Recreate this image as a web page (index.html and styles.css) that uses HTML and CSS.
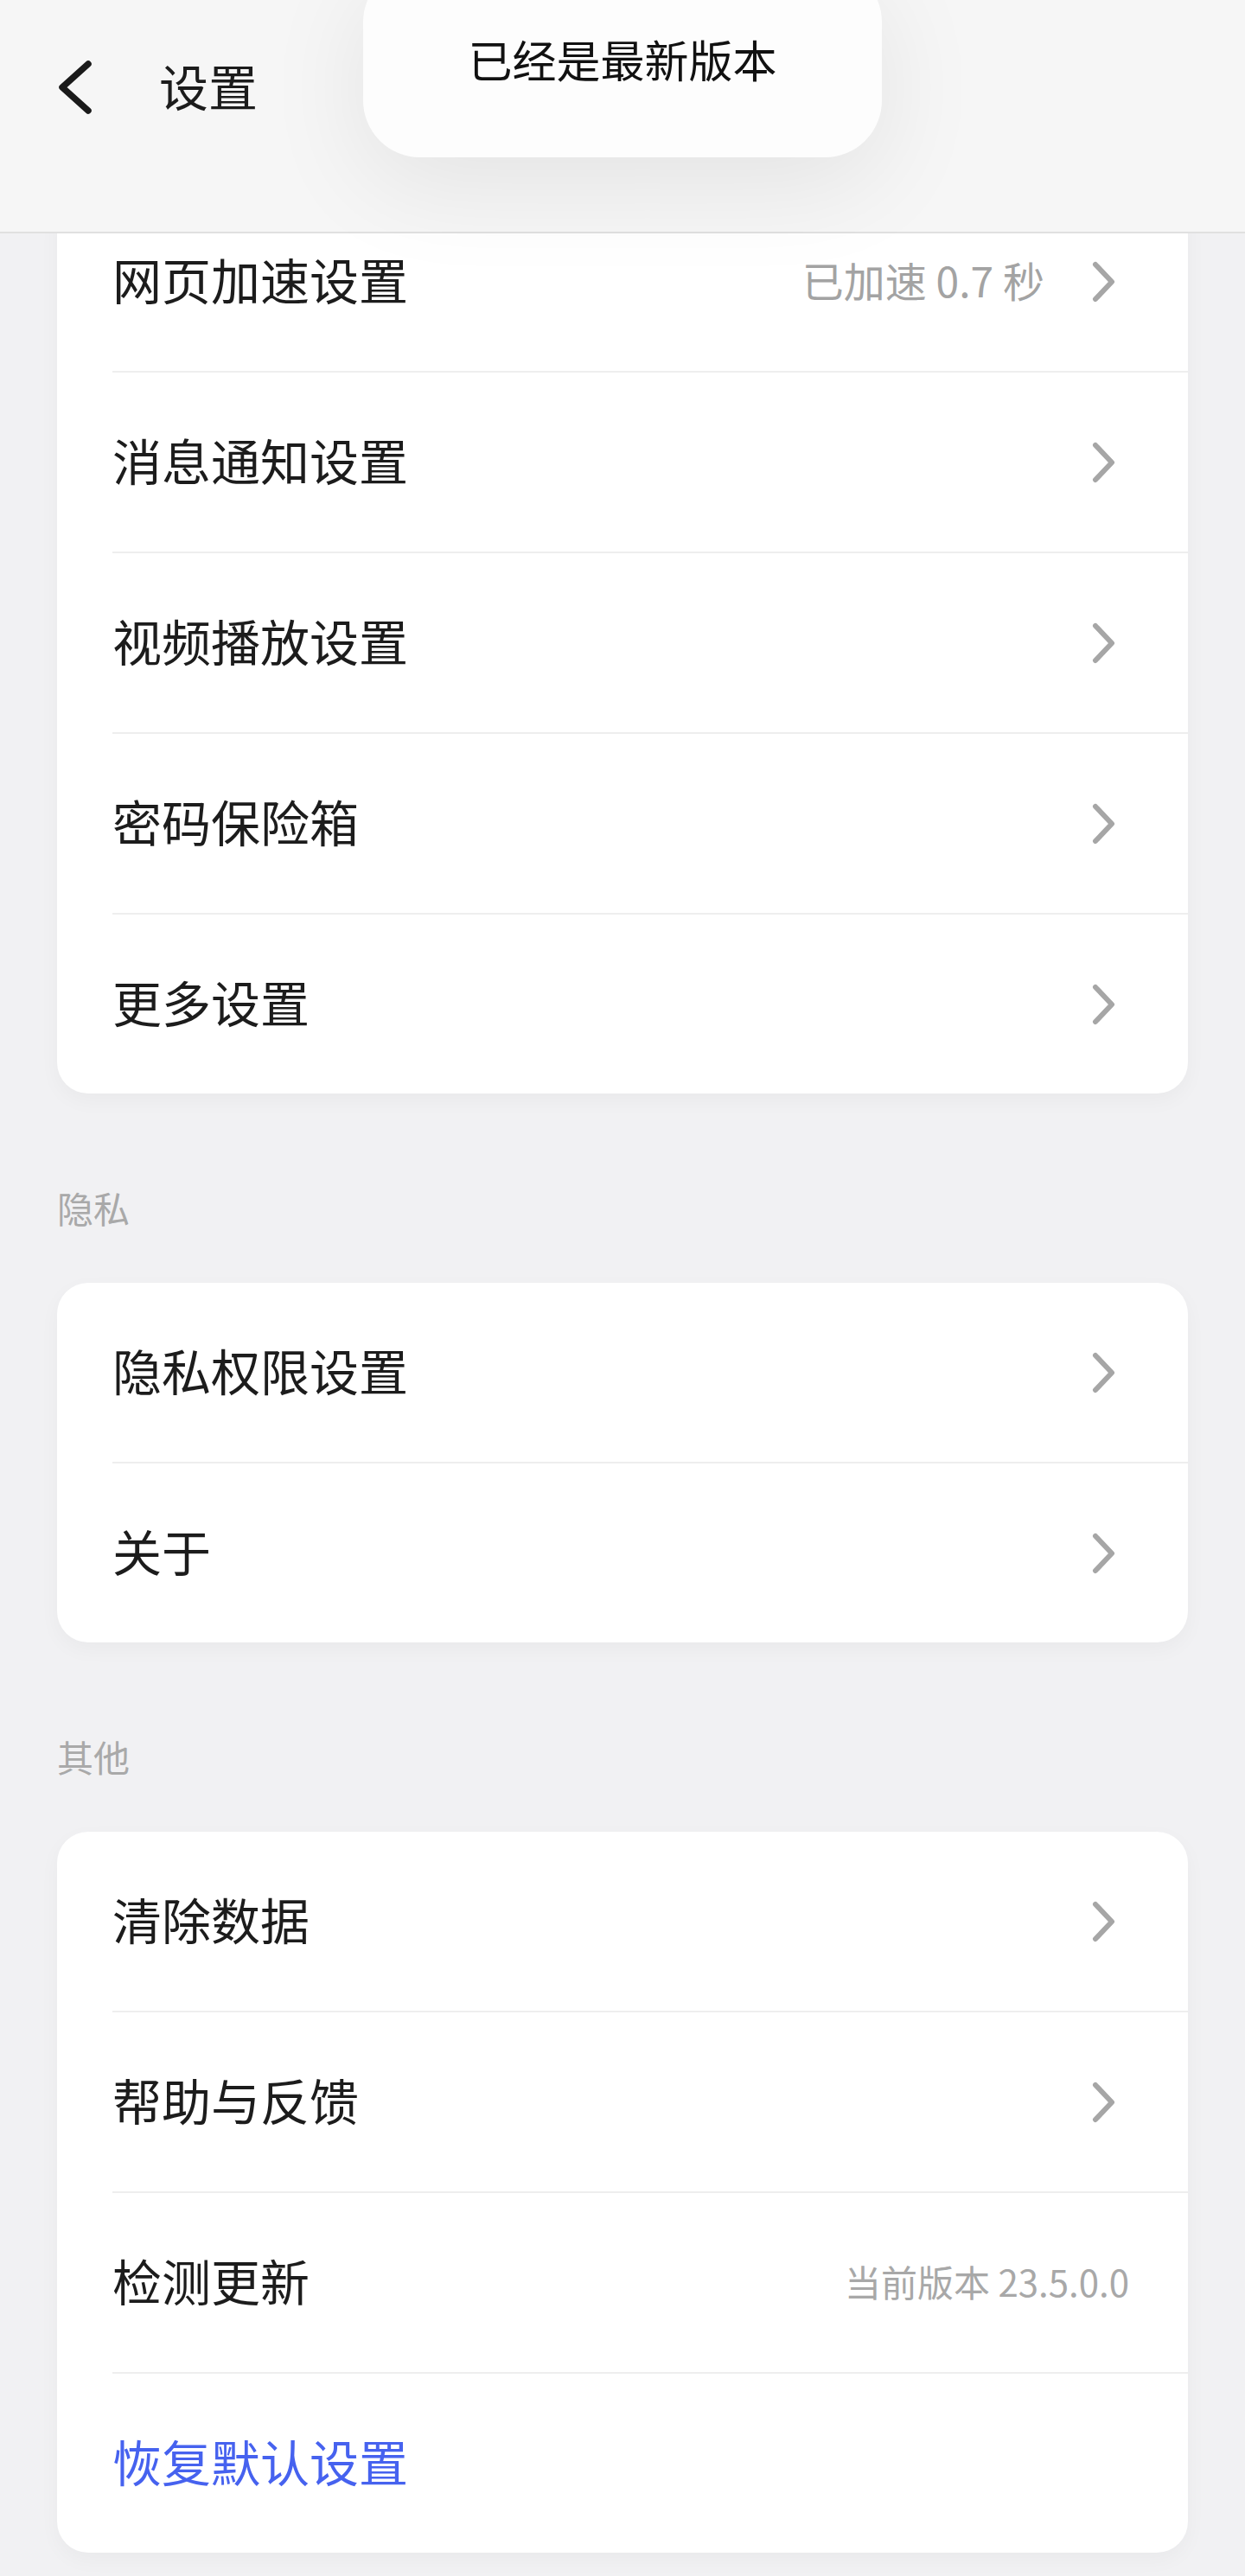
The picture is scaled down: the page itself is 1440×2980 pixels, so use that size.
FILE: index.html
```html
<!DOCTYPE html>
<html lang="zh-CN">
<head>
    <meta charset="UTF-8">
    <title>设置</title>
    <meta name="viewport" content="width=device-width, initial-scale=1.0">
    <link rel="stylesheet" href="styles.css">
</head>
<body>
    <header class="topbar">
        <svg class="back" width="40" height="64" viewBox="0 0 40 64">
            <polyline points="36,4 6,31 36,58" fill="none" stroke="#1a1a1a" stroke-width="7.5" stroke-linecap="round" stroke-linejoin="round"/>
        </svg>
        <span class="title">设置</span>
    </header>

    <div class="toast">已经是最新版本</div>

    <main class="content">
        <div class="card">
            <div class="row">
                <span class="label">网页加速设置</span>
                <span class="value">已加速 0.7 秒</span>
                <svg class="chev" width="28" height="48" viewBox="0 0 28 48"><polyline points="4,4 23,24 4,44"/></svg>
            </div>
            <div class="row">
                <span class="label">消息通知设置</span>
                <svg class="chev" width="28" height="48" viewBox="0 0 28 48"><polyline points="4,4 23,24 4,44"/></svg>
            </div>
            <div class="row">
                <span class="label">视频播放设置</span>
                <svg class="chev" width="28" height="48" viewBox="0 0 28 48"><polyline points="4,4 23,24 4,44"/></svg>
            </div>
            <div class="row">
                <span class="label">密码保险箱</span>
                <svg class="chev" width="28" height="48" viewBox="0 0 28 48"><polyline points="4,4 23,24 4,44"/></svg>
            </div>
            <div class="row">
                <span class="label">更多设置</span>
                <svg class="chev" width="28" height="48" viewBox="0 0 28 48"><polyline points="4,4 23,24 4,44"/></svg>
            </div>
        </div>

        <div class="section-title">隐私</div>
        <div class="card">
            <div class="row">
                <span class="label">隐私权限设置</span>
                <svg class="chev" width="28" height="48" viewBox="0 0 28 48"><polyline points="4,4 23,24 4,44"/></svg>
            </div>
            <div class="row">
                <span class="label">关于</span>
                <svg class="chev" width="28" height="48" viewBox="0 0 28 48"><polyline points="4,4 23,24 4,44"/></svg>
            </div>
        </div>

        <div class="section-title">其他</div>
        <div class="card">
            <div class="row">
                <span class="label">清除数据</span>
                <svg class="chev" width="28" height="48" viewBox="0 0 28 48"><polyline points="4,4 23,24 4,44"/></svg>
            </div>
            <div class="row">
                <span class="label">帮助与反馈</span>
                <svg class="chev" width="28" height="48" viewBox="0 0 28 48"><polyline points="4,4 23,24 4,44"/></svg>
            </div>
            <div class="row">
                <span class="label">检测更新</span>
                <span class="version">当前版本 23.5.0.0</span>
            </div>
            <div class="row">
                <span class="label link">恢复默认设置</span>
            </div>
        </div>
    </main>
</body>
</html>
```

FILE: styles.css
```css
* { box-sizing: border-box; }
html { background: #f1f1f3; }
body {
    margin: 0;
    font-family: "Noto Sans CJK SC", "Noto Sans", sans-serif;
    color: #1c1c1c;
    background: #f1f1f3;
}

/* top bar stays over the scrolled list */
.topbar {
    position: fixed;
    top: 0;
    left: 0;
    right: 0;
    height: 270px;
    padding: 70px 0 0 66px;
    display: flex;
    align-items: flex-start;
    background: #f6f6f6;
    border-bottom: 2px solid #e0e0e0;
    z-index: 2;
}
.topbar .back { display: block; }
.topbar .title {
    margin: -4px 0 0 78px;
    font-size: 57px;
    line-height: 64px;
}

.toast {
    position: fixed;
    top: -40px;
    left: 50%;
    transform: translateX(-50%);
    width: 600px;
    height: 222px;
    padding-top: 73px;
    border-radius: 66px;
    background: #fdfdfd;
    box-shadow: 0 30px 120px rgba(0,0,0,0.08);
    text-align: center;
    font-size: 51px;
    line-height: 70px;
    color: #111;
    z-index: 3;
}

.content { padding: 222px 66px 27px; }

.card {
    background: #fff;
    border-radius: 36px;
    box-shadow: 0 8px 24px rgba(0,0,0,0.035);
    overflow: hidden;
}
.row {
    height: 209px;
    margin-left: 64px;
    padding-right: 68px;
    display: flex;
    align-items: center;
    border-bottom: 2px solid #eeeeee;
}
.row:last-child { border-bottom: none; height: 207px; }
.row .label {
    flex: 1;
    margin-bottom: 7px;
    font-size: 57px;
    line-height: 1;
}
.row .label.link { color: #4662ef; }
.row .value {
    margin: 0 55px 5px 0;
    font-size: 48px;
    color: #a3a3a3;
}
.row .version {
    margin-bottom: 5px;
    font-size: 42px;
    color: #a8a8a8;
}
.chev {
    margin-right: 15px;
    fill: none;
    stroke: #a6a6a6;
    stroke-width: 6;
    stroke-linecap: round;
    stroke-linejoin: round;
}

.section-title {
    margin: 104px 0 59px;
    font-size: 42px;
    line-height: 56px;
    color: #a9a9a9;
}
```
